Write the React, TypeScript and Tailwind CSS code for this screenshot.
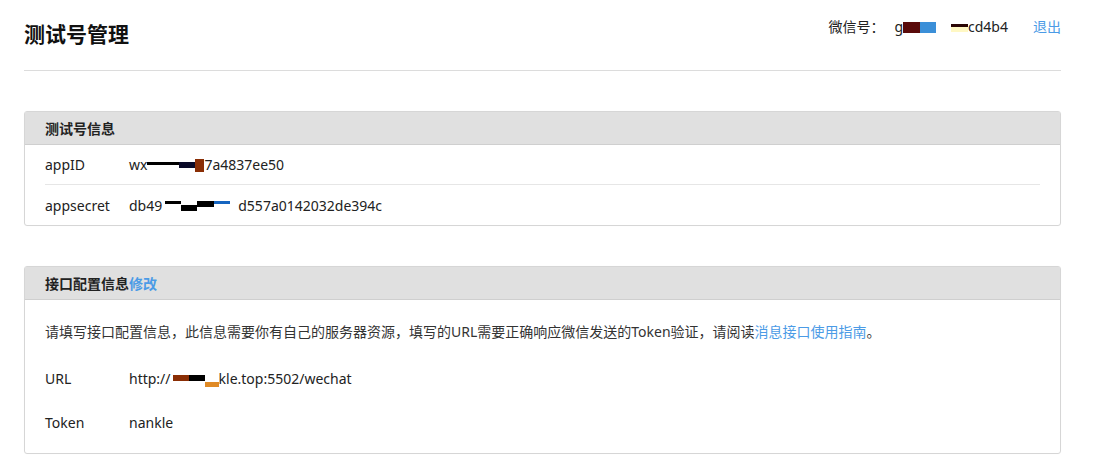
import React from "react";

type Block = { w: number; h: number; top: number; color: string };

function Redact({ blocks, height = 14 }: { blocks: Block[]; height?: number }) {
  return (
    <span className="relative inline-flex align-[-2px]" style={{ height }}>
      {blocks.map((b, i) => (
        <span key={i} className="relative block" style={{ width: b.w }}>
          <span
            className="absolute left-0 right-0 block"
            style={{ top: b.top, height: b.h, background: b.color }}
          />
        </span>
      ))}
    </span>
  );
}

function Panel({
  title,
  children,
}: {
  title: React.ReactNode;
  children: React.ReactNode;
}) {
  return (
    <div className="rounded-[3px] border border-[#d6d6d6] shadow-[0_0_1px_rgba(0,0,0,0.05)]">
      <div className="flex h-[33px] items-center border-b border-[#cfcfcf] bg-[#e0e0e0] px-5 text-[14px] font-bold text-[#222]">
        {title}
      </div>
      {children}
    </div>
  );
}

export default function App() {
  return (
    <div className="min-h-screen bg-white pl-6 pr-[33px] font-['Noto_Sans','Noto_Sans_CJK_SC',sans-serif] text-[14px] text-[#222]">
      <div className="flex h-[71px] items-start justify-between border-b border-[#dcdcdc]">
        <h1 className="mt-[20px] text-[21px] font-bold leading-[28px] text-[#111]">
          测试号管理
        </h1>
        <div className="mt-[16px] flex items-center text-[14px] leading-[22px]">
          <span>微信号：</span>
          <span className="ml-[10px]">
            g
            <Redact
              blocks={[
                { w: 17, h: 11, top: 2, color: "#5a0a0a" },
                { w: 16, h: 11, top: 2, color: "#3b8fd8" },
                { w: 15, h: 0, top: 0, color: "transparent" },
                { w: 17, h: 3, top: 4, color: "#2a0505" },
              ]}
            />
            <span className="relative -ml-[17px] inline-block h-[5px] w-[17px] bg-[#fff8c4] align-[0px]" />
            cd4b4
          </span>
          <a className="ml-[25px] text-[#4b9be6]">退出</a>
        </div>
      </div>

      <div className="mt-10">
        <Panel title="测试号信息">
          <div className="px-5">
            <div className="flex h-10 items-center border-b border-[#e6e6e6]">
              <span className="w-[84px]">appID</span>
              <span>
                wx
                <Redact
                  blocks={[
                    { w: 17, h: 3, top: 4, color: "#000" },
                    { w: 15, h: 3, top: 4, color: "#000" },
                    { w: 16, h: 6, top: 4, color: "#0a0a28" },
                    { w: 9, h: 13, top: 1, color: "#8a2e05" },
                  ]}
                />
                7a4837ee50
              </span>
            </div>
            <div className="flex h-10 items-center">
              <span className="w-[84px]">appsecret</span>
              <span>
                db49
                <Redact
                  blocks={[
                    { w: 3, h: 0, top: 0, color: "transparent" },
                    { w: 16, h: 3, top: 2, color: "#000" },
                    { w: 16, h: 6, top: 6, color: "#000" },
                    { w: 17, h: 6, top: 2, color: "#000" },
                    { w: 16, h: 3, top: 2, color: "#1565c0" },
                    { w: 8, h: 0, top: 0, color: "transparent" },
                  ]}
                />
                d557a0142032de394c
              </span>
            </div>
          </div>
        </Panel>
      </div>

      <div className="mt-10">
        <Panel
          title={
            <>
              接口配置信息<a className="text-[#4b9be6]">修改</a>
            </>
          }
        >
          <div className="px-5 py-[9px]">
            <div className="flex h-11 items-center text-[14px] text-[#333]">
              请填写接口配置信息，此信息需要你有自己的服务器资源，填写的URL需要正确响应微信发送的Token验证，请阅读
              <a className="text-[#4b9be6]">消息接口使用指南</a>。
            </div>
            <div className="mt-[3px] flex h-11 items-center">
              <span className="w-[84px]">URL</span>
              <span>
                http://
                <Redact
                  blocks={[
                    { w: 2, h: 0, top: 0, color: "transparent" },
                    { w: 16, h: 6, top: 3, color: "#8a2e05" },
                    { w: 16, h: 6, top: 3, color: "#000" },
                    { w: 14, h: 5, top: 10, color: "#e08a25" },
                  ]}
                />
                kle.top:5502/wechat
              </span>
            </div>
            <div className="flex h-11 items-center">
              <span className="w-[84px]">Token</span>
              <span>nankle</span>
            </div>
          </div>
        </Panel>
      </div>
    </div>
  );
}
